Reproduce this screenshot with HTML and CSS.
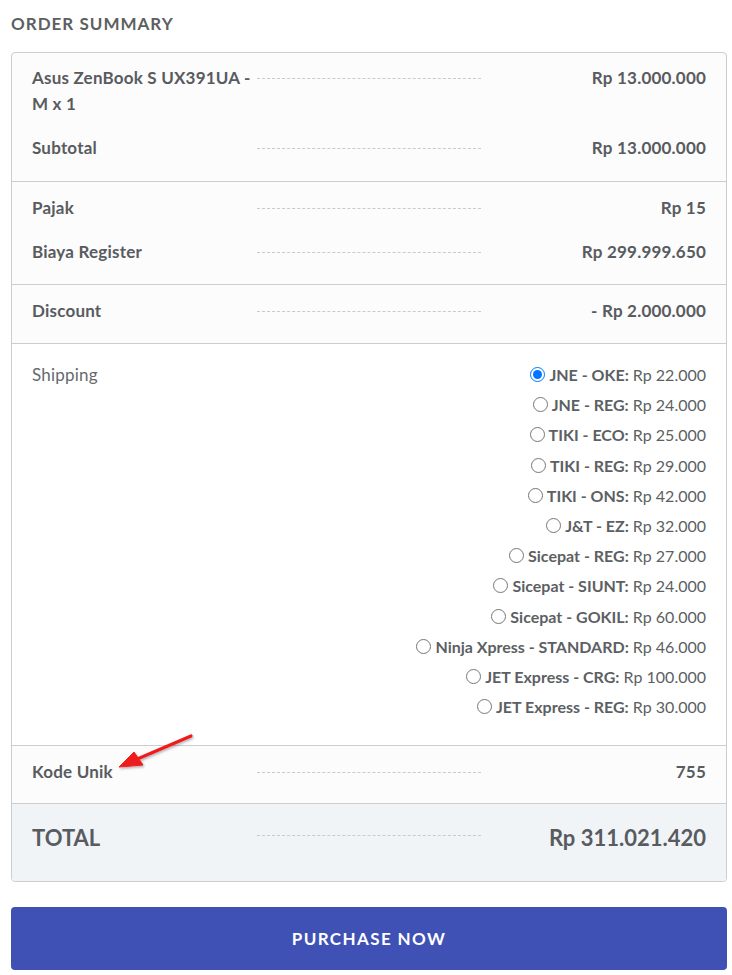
FILE: index.html
```html
<!DOCTYPE html>
<html>
<head>
<meta charset="utf-8">
<link rel="stylesheet" href="styles.css">
</head>
<body>
<div class="wrap">
  <h2 class="title">ORDER SUMMARY</h2>
  <div class="card">
    <div class="section">
      <div class="row">
        <div class="label">Asus ZenBook S UX391UA - M x 1</div>
        <div class="dash"></div>
        <div class="value">Rp 13.000.000</div>
      </div>
      <div class="row">
        <div class="label">Subtotal</div>
        <div class="dash"></div>
        <div class="value">Rp 13.000.000</div>
      </div>
    </div>
    <div class="section">
      <div class="row">
        <div class="label">Pajak</div>
        <div class="dash"></div>
        <div class="value">Rp 15</div>
      </div>
      <div class="row">
        <div class="label">Biaya Register</div>
        <div class="dash"></div>
        <div class="value">Rp 299.999.650</div>
      </div>
    </div>
    <div class="section">
      <div class="row">
        <div class="label">Discount</div>
        <div class="dash"></div>
        <div class="value">- Rp 2.000.000</div>
      </div>
    </div>
    <div class="section shipping">
      <div class="ship-row">
        <div class="ship-label">Shipping</div>
        <div class="options">
          <label class="opt"><input type="radio" name="ship" checked><b>JNE - OKE:</b> Rp 22.000</label>
          <label class="opt"><input type="radio" name="ship"><b>JNE - REG:</b> Rp 24.000</label>
          <label class="opt"><input type="radio" name="ship"><b>TIKI - ECO:</b> Rp 25.000</label>
          <label class="opt"><input type="radio" name="ship"><b>TIKI - REG:</b> Rp 29.000</label>
          <label class="opt"><input type="radio" name="ship"><b>TIKI - ONS:</b> Rp 42.000</label>
          <label class="opt"><input type="radio" name="ship"><b>J&amp;T - EZ:</b> Rp 32.000</label>
          <label class="opt"><input type="radio" name="ship"><b>Sicepat - REG:</b> Rp 27.000</label>
          <label class="opt"><input type="radio" name="ship"><b>Sicepat - SIUNT:</b> Rp 24.000</label>
          <label class="opt"><input type="radio" name="ship"><b>Sicepat - GOKIL:</b> Rp 60.000</label>
          <label class="opt"><input type="radio" name="ship"><b>Ninja Xpress - STANDARD:</b> Rp 46.000</label>
          <label class="opt"><input type="radio" name="ship"><b>JET Express - CRG:</b> Rp 100.000</label>
          <label class="opt"><input type="radio" name="ship"><b>JET Express - REG:</b> Rp 30.000</label>
        </div>
      </div>
    </div>
    <div class="section kode">
      <div class="row">
        <div class="label">Kode Unik</div>
        <div class="dash"></div>
        <div class="value">755</div>
      </div>
      <svg class="arrow" width="90" height="50" viewBox="0 0 90 50">
        <defs>
          <filter id="sh" x="-20%" y="-20%" width="140%" height="140%">
            <feDropShadow dx="1" dy="1.5" stdDeviation="1.2" flood-color="#000" flood-opacity="0.3"/>
          </filter>
        </defs>
        <g filter="url(#sh)" fill="#ee1c1c" stroke="#ee1c1c">
          <line x1="86" y1="3" x2="30" y2="27" stroke-width="3.2" stroke-linecap="round"/>
          <polygon points="14,34 29,19 38,32" stroke-width="1" stroke-linejoin="round"/>
        </g>
      </svg>
    </div>
    <div class="section total">
      <div class="row">
        <div class="label">TOTAL</div>
        <div class="dash"></div>
        <div class="value">Rp 311.021.420</div>
      </div>
    </div>
  </div>
  <button class="buy">PURCHASE NOW</button>
</div>
</body>
</html>
```
FILE: styles.css
```css
* { box-sizing: border-box; }
html, body { margin: 0; padding: 0; background: #fff; }
body {
  font-family: "Source Sans Pro", Lato, "Noto Sans", sans-serif;
  font-size: 17px;
  letter-spacing: 0.2px;
  color: #585b5f;
}
.wrap {
  margin-left: 11px;
  width: 716px;
  padding-top: 13px;
}
.title {
  margin: 0 0 17px;
  font-size: 17px;
  font-weight: 700;
  letter-spacing: 1px;
  line-height: 22px;
  color: #5d5f62;
}
.card {
  border: 1px solid #cbcdd0;
  border-radius: 4px;
  background: #fcfcfc;
  overflow: hidden;
}
.section {
  padding: 13px 20px 1px;
  border-top: 1px solid #cbcdd0;
}
.section:first-child { border-top: none; padding-top: 12px; padding-bottom: 2px; }
.row {
  display: grid;
  grid-template-columns: 1fr 1fr 1fr;
  line-height: 26px;
  margin-bottom: 18px;
  font-weight: 700;
}
.dash {
  margin-top: 13px;
  height: 0;
  border-top: 1px dashed #c8cacd;
}
.value { text-align: right; }
.shipping {
  background: #fff;
  padding-top: 16px;
  padding-bottom: 23px;
}
.ship-row {
  display: grid;
  grid-template-columns: 1fr 2fr;
}
.ship-label {
  line-height: 30px;
  color: #66696d;
}
.options {
  display: flex;
  flex-direction: column;
  align-items: flex-end;
}
.opt {
  display: block;
  height: 30.2px;
  line-height: 30px;
  font-size: 16px;
  letter-spacing: 0;
  color: #5c5f63;
  white-space: nowrap;
}
.opt b { font-weight: 700; }
.opt input {
  width: 15px;
  height: 15px;
  margin: 0 4px 0 0;
  vertical-align: -1px;
}
.kode { position: relative; padding-bottom: 0; }
.arrow {
  position: absolute;
  left: 93px;
  top: -13px;
  overflow: visible;
}
.total {
  background: #f1f4f7;
  padding-top: 17px;
  padding-bottom: 8px;
}
.total .row {
  font-size: 22px;
  letter-spacing: 0;
  line-height: 34px;
}
.total .dash { margin-top: 14px; }
.buy {
  display: block;
  width: 100%;
  margin-top: 25px;
  height: 63px;
  border: none;
  border-radius: 4px;
  background: #3f51b5;
  color: #fff;
  font-family: inherit;
  font-size: 17px;
  font-weight: 700;
  letter-spacing: 1.4px;
}
```
